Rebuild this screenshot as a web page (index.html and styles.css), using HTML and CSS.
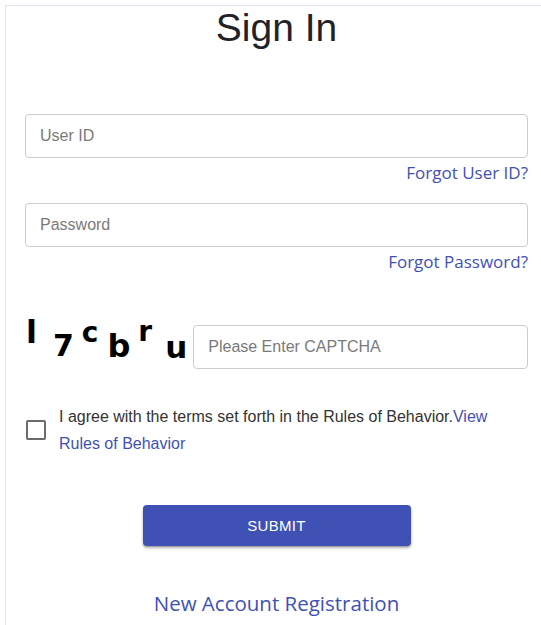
FILE: index.html
```html
<!DOCTYPE html>
<html lang="en">
<head>
<meta charset="utf-8">
<title>Sign In</title>
<link rel="stylesheet" href="styles.css">
</head>
<body>
<main class="card">
  <h1 class="card-title">Sign In</h1>
  <form class="signin-form" onsubmit="return false;">
    <input class="text-input" type="text" placeholder="User ID">
    <div class="helper-row"><a class="helper-link" href="#">Forgot User ID?</a></div>

    <input class="text-input field-gap" type="password" placeholder="Password">
    <div class="helper-row"><a class="helper-link" href="#">Forgot Password?</a></div>

    <div class="captcha-row">
      <div class="captcha-image" aria-label="CAPTCHA">
        <span class="cap cap-1">l</span>
        <span class="cap cap-2">7</span>
        <span class="cap cap-3">c</span>
        <span class="cap cap-4">b</span>
        <span class="cap cap-5">r</span>
        <span class="cap cap-6">u</span>
      </div>
      <input class="text-input captcha-input" type="text" placeholder="Please Enter CAPTCHA">
    </div>

    <label class="agree-row">
      <input class="agree-box" type="checkbox">
      <span class="agree-text">I agree with the terms set forth in the Rules of Behavior.<a class="rules-link" href="#">View Rules of Behavior</a></span>
    </label>

    <div class="submit-row">
      <button class="submit-btn" type="submit">SUBMIT</button>
    </div>

    <div class="register-row">
      <a class="register-link" href="#">New Account Registration</a>
    </div>
  </form>
</main>
</body>
</html>
```

FILE: styles.css
```css
html, body {
  margin: 0;
  padding: 0;
  background: #ffffff;
  overflow: hidden;
}

body {
  font-family: "Liberation Sans", Arial, sans-serif;
  color: #212529;
}

.card {
  box-sizing: border-box;
  width: 544px;
  min-height: 640px;
  margin: 5px 0 0 5px;
  padding: 1px 20px 0 19px;
  border: 1px solid #dde6f2;
  background: #ffffff;
}

.card-title {
  margin: 1px 0 0;
  font-family: "Liberation Sans", Arial, sans-serif;
  font-weight: 400;
  font-size: 39px;
  line-height: 39px;
  text-align: center;
  color: #1f2328;
}

.signin-form {
  display: flex;
  flex-direction: column;
  margin-top: 67px;
}

.text-input {
  box-sizing: border-box;
  display: block;
  width: 100%;
  height: 44px;
  margin: 0;
  padding: 0 14px;
  border: 1px solid #cccccc;
  border-radius: 4px;
  font-family: "Liberation Sans", Arial, sans-serif;
  font-size: 16px;
  color: #333333;
  background: #ffffff;
  outline: none;
}

.text-input::placeholder {
  color: #7a7a7a;
  opacity: 1;
}

.field-gap {
  margin-top: 18px;
}

.helper-row {
  margin-top: 3px;
  text-align: right;
  font-family: "Open Sans", "Noto Sans", sans-serif;
  font-size: 17px;
  line-height: 24px;
}

.helper-link {
  color: #3f51b5;
  text-decoration: none;
}

.captcha-row {
  display: flex;
  align-items: flex-start;
  margin-top: 42px;
}

.captcha-image {
  display: flex;
  align-items: flex-start;
  flex: none;
  font-family: "DejaVu Sans", sans-serif;
  font-weight: 700;
  color: #000000;
  user-select: none;
}

.cap {
  display: block;
  line-height: 1;
}

/* each glyph gets its own size and baseline shift */
.cap-1 { font-size: 32px; margin-left: 1px;  margin-top: 0; }
.cap-2 { font-size: 30px; margin-left: 16px; margin-top: 15px; }
.cap-3 { font-size: 28px; margin-left: 8px;  margin-top: 3px; }
.cap-4 { font-size: 32px; margin-left: 9px;  margin-top: 14px; }
.cap-5 { font-size: 28px; margin-left: 8px;  margin-top: 2px; }
.cap-6 { font-size: 31px; margin-left: 13px; margin-top: 16px; }

.captcha-input {
  flex: 1;
  width: auto;
  min-width: 0;
  margin-top: 9px;
  margin-left: 6px;
}

.agree-row {
  display: flex;
  align-items: center;
  margin-top: 34px;
  cursor: pointer;
}

.agree-box {
  appearance: none;
  -webkit-appearance: none;
  box-sizing: border-box;
  flex: none;
  width: 20px;
  height: 20px;
  margin: 0 0 0 1px;
  border: 2px solid #6b6b6b;
  border-radius: 2px;
  background: #ffffff;
}

.agree-text {
  margin-left: 13px;
  padding-right: 10px;
  font-size: 16px;
  line-height: 27px;
  color: #333333;
}

.rules-link {
  color: #3f51b5;
  text-decoration: none;
}

.submit-row {
  display: flex;
  justify-content: center;
  margin-top: 48px;
}

.submit-btn {
  box-sizing: border-box;
  width: 268px;
  height: 41px;
  border: none;
  border-radius: 4px;
  background: #3f51b5;
  color: #ffffff;
  font-family: "Liberation Sans", Arial, sans-serif;
  font-size: 15px;
  letter-spacing: 0.3px;
  box-shadow: 0 2px 3px rgba(0, 0, 0, 0.3), 0 1px 1px rgba(0, 0, 0, 0.14);
  cursor: pointer;
}

.register-row {
  margin-top: 42px;
  text-align: center;
  font-family: "Open Sans", "Noto Sans", sans-serif;
  font-size: 20.5px;
  line-height: 30px;
}

.register-link {
  color: #3f51b5;
  text-decoration: none;
}
```
